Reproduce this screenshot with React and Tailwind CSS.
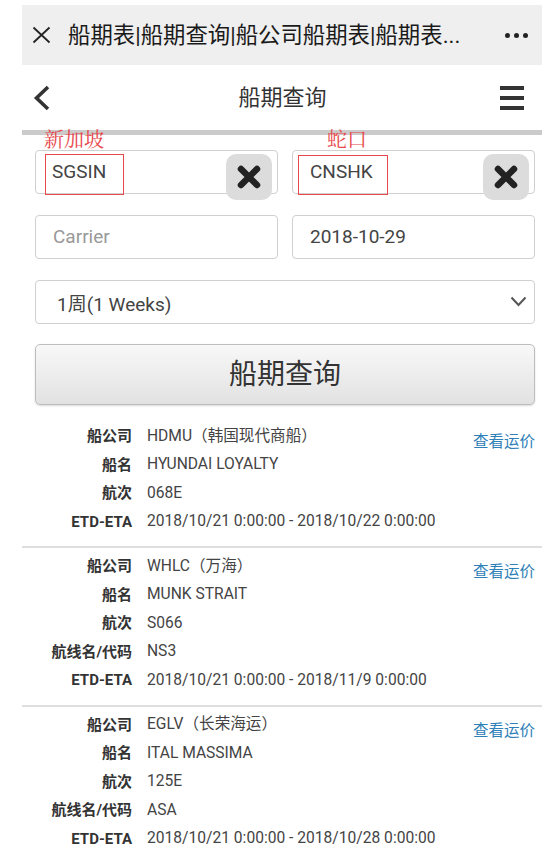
import React from "react";

const cards = [
  {
    rows: [
      ["船公司", "HDMU（韩国现代商船）"],
      ["船名", "HYUNDAI LOYALTY"],
      ["航次", "068E"],
      ["ETD-ETA", "2018/10/21 0:00:00 - 2018/10/22 0:00:00"],
    ],
  },
  {
    rows: [
      ["船公司", "WHLC（万海）"],
      ["船名", "MUNK STRAIT"],
      ["航次", "S066"],
      ["航线名/代码", "NS3"],
      ["ETD-ETA", "2018/10/21 0:00:00 - 2018/11/9 0:00:00"],
    ],
  },
  {
    rows: [
      ["船公司", "EGLV（长荣海运）"],
      ["船名", "ITAL MASSIMA"],
      ["航次", "125E"],
      ["航线名/代码", "ASA"],
      ["ETD-ETA", "2018/10/21 0:00:00 - 2018/10/28 0:00:00"],
    ],
  },
];

function ClearBtn() {
  return (
    <div className="absolute right-[5px] top-[3px] w-[46px] h-[46px] rounded-[10px] bg-[#dcdcdc] flex items-center justify-center">
      <svg width="24" height="24" viewBox="0 0 24 24">
        <path d="M4 4 L20 20 M20 4 L4 20" stroke="#222" strokeWidth="6.5" strokeLinecap="round" />
      </svg>
    </div>
  );
}

export default function App() {
  return (
    <div className="w-[558px] min-h-[864px] bg-white pt-[5px] px-[16px] pl-[22px] font-[Roboto,'Noto_Sans_CJK_SC',sans-serif] text-[#333]">
      {/* top bar */}
      <div className="h-[60px] bg-[#efefef] flex items-center pl-[10px] pr-[14px]">
        <svg width="19" height="18" viewBox="0 0 19 18" className="shrink-0">
          <path d="M1.5 1.5 L17.5 16.5 M17.5 1.5 L1.5 16.5" stroke="#222" strokeWidth="1.8" />
        </svg>
        <div className="ml-[17px] text-[22.4px] leading-[30px] text-[#1a1a1a] whitespace-nowrap">
          船期表|船期查询|船公司船期表|船期表...
        </div>
        <div className="ml-auto flex gap-[4px] items-center">
          <span className="w-[5px] h-[5px] rounded-full bg-[#222]" />
          <span className="w-[5px] h-[5px] rounded-full bg-[#222]" />
          <span className="w-[5px] h-[5px] rounded-full bg-[#222]" />
        </div>
      </div>

      {/* nav */}
      <div className="h-[65px] flex items-center justify-between pl-[11px] pr-[18px]">
        <svg width="18" height="26" viewBox="0 0 18 26">
          <path d="M15 2 L3.5 13 L15 24" fill="none" stroke="#333" strokeWidth="3.6" />
        </svg>
        <div className="text-[22px] leading-[30px] text-[#333] ml-[14px]">船期查询</div>
        <div className="flex flex-col gap-[6px] w-[24px]">
          <span className="h-[4px] bg-[#333]" />
          <span className="h-[4px] bg-[#333]" />
          <span className="h-[4px] bg-[#333]" />
        </div>
      </div>
      <div className="h-[5px] bg-[#cbcbcb]" />

      {/* form */}
      <div className="pl-[13px] pr-[7px] pt-[15px] flex flex-col">
        <div className="flex gap-[14px]">
          <div className="relative w-[243px] h-[44px] border border-[#d0d0d0] rounded-[4px] flex items-center pl-[16px] text-[19px] text-[#444]">
            SGSIN
            <ClearBtn />
            <div className="absolute left-[9px] top-[3px] w-[79px] h-[41px] border border-[#e8474b]" />
            <div className="absolute left-[8px] top-[-22px] text-[20px] leading-[20px] text-[#e8474b] font-['Noto_Serif_CJK_SC',serif]">新加坡</div>
          </div>
          <div className="relative w-[243px] h-[44px] border border-[#d0d0d0] rounded-[4px] flex items-center pl-[17px] text-[19px] text-[#444]">
            CNSHK
            <ClearBtn />
            <div className="absolute left-[5px] top-[4px] w-[90px] h-[40px] border border-[#e8474b]" />
            <div className="absolute left-[34px] top-[-22px] text-[20px] leading-[20px] text-[#e8474b] font-['Noto_Serif_CJK_SC',serif]">蛇口</div>
          </div>
        </div>

        <div className="flex gap-[14px] mt-[21px]">
          <div className="w-[243px] h-[44px] border border-[#d0d0d0] rounded-[4px] flex items-center pl-[17px] text-[19px] text-[#999]">
            Carrier
          </div>
          <div className="w-[243px] h-[44px] border border-[#d0d0d0] rounded-[4px] flex items-center pl-[17px] text-[19px] text-[#444]">
            2018-10-29
          </div>
        </div>

        <div className="mt-[21px] h-[44px] border border-[#d0d0d0] rounded-[4px] flex items-center pl-[21px] pr-[7px] pt-[7px] text-[19px] text-[#444]">
          1周(1 Weeks)
          <svg width="17" height="11" viewBox="0 0 17 11" className="ml-auto mb-[8px]">
            <path d="M1.5 1.5 L8.5 9 L15.5 1.5" fill="none" stroke="#555" strokeWidth="2" />
          </svg>
        </div>

        <div className="mt-[20px] h-[61px] border border-[#bdbdbd] rounded-[5px] bg-gradient-to-b from-[#f8f8f8] to-[#e2e2e2] shadow-[0_1px_2px_rgba(0,0,0,0.15)] flex items-center justify-center text-[28px] text-[#333]">
          船期查询
        </div>
      </div>

      {/* results */}
      <div className="mt-[13px]">
        {cards.map((c, i) => (
          <div key={i}>
            {i > 0 && <div className="h-[2px] bg-[#dedede]" />}
            <div className="relative pt-[4px] pb-[10px]">
              {c.rows.map(([k, v]) => (
                <div key={k} className="h-[28.5px] flex items-center">
                  <div className="w-[110px] text-right font-bold text-[15px] text-[#333]">{k}</div>
                  <div className="ml-[15px] text-[15.6px] text-[#444] whitespace-nowrap">{v}</div>
                </div>
              ))}
              <div className="absolute right-[7px] top-[12px] text-[15.5px] leading-[24px] text-[#2f80b7]">查看运价</div>
            </div>
          </div>
        ))}
      </div>
    </div>
  );
}
